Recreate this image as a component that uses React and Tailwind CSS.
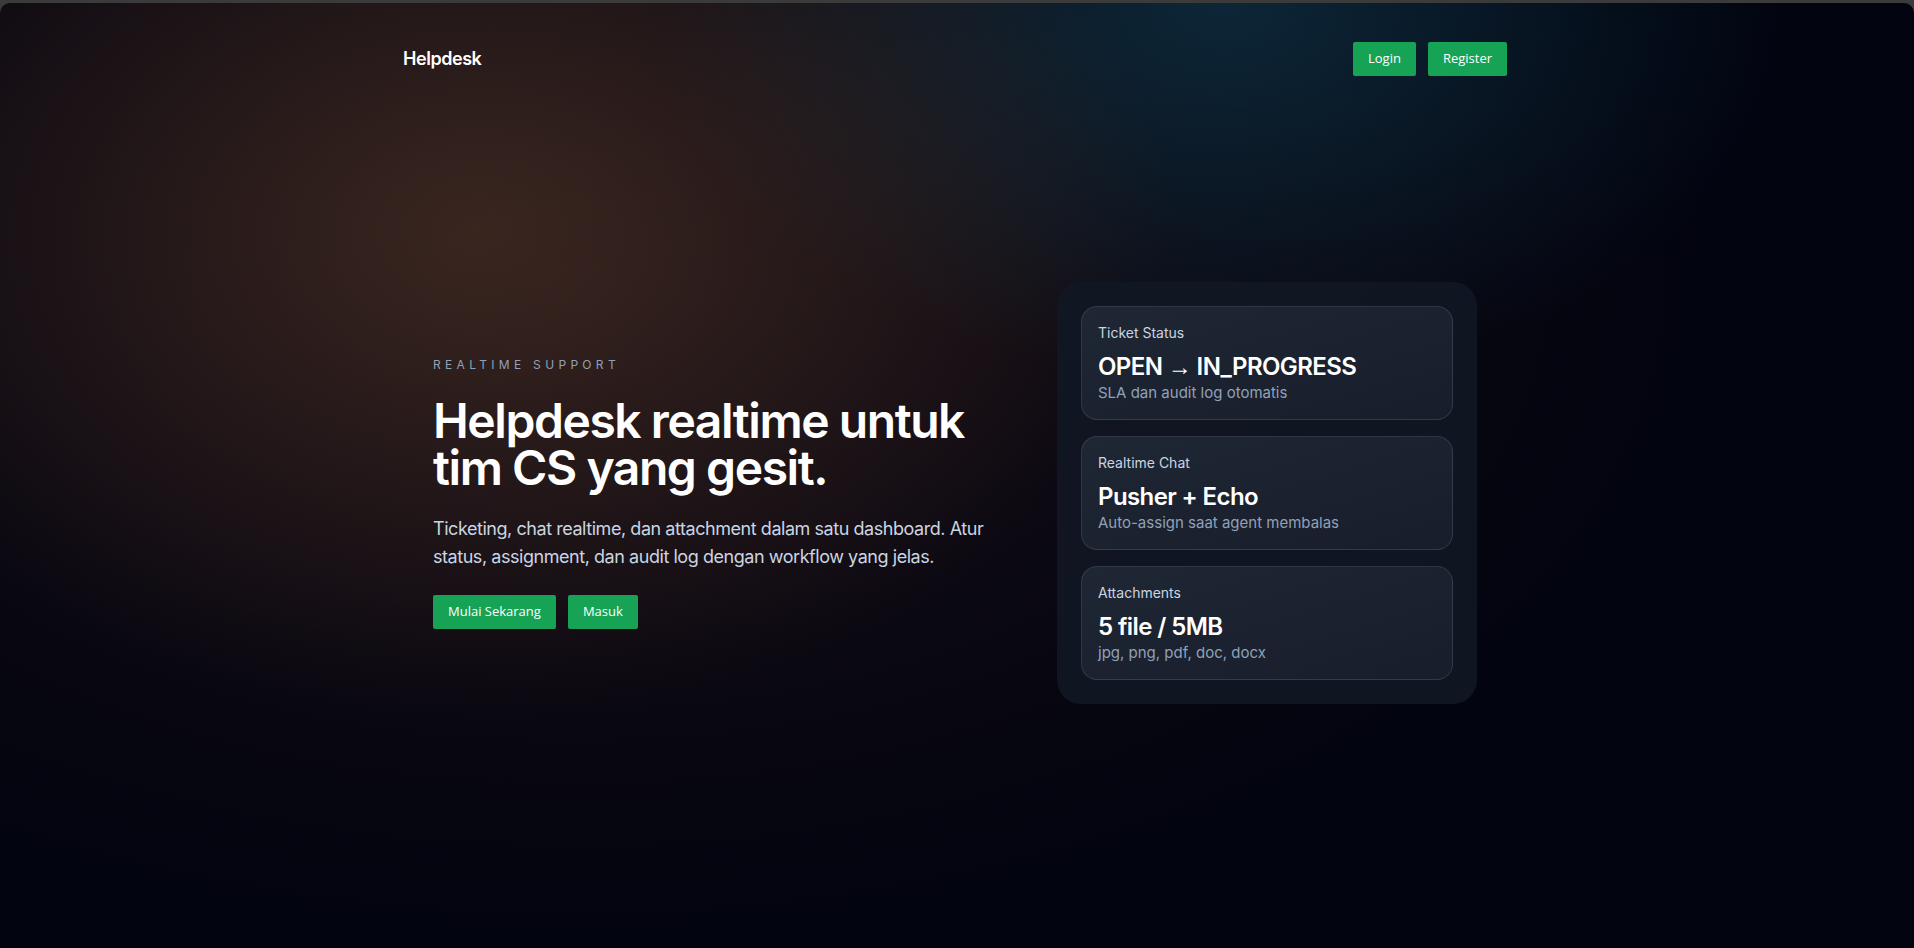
const FEATURES = [
  { label: "Ticket Status", title: "OPEN → IN_PROGRESS", note: "SLA dan audit log otomatis" },
  { label: "Realtime Chat", title: "Pusher + Echo", note: "Auto-assign saat agent membalas" },
  { label: "Attachments", title: "5 file / 5MB", note: "jpg, png, pdf, doc, docx" },
];

function GreenButton({ children }) {
  return (
    <button className="flex h-[34px] items-center rounded-[2px] bg-[#17a356] px-[15px] text-[13px] text-white font-['Open_Sans',sans-serif]">
      {children}
    </button>
  );
}

// the arrow in the title is lighter than Inter's
function Title({ text }) {
  const parts = text.split("→");
  if (parts.length < 2) return text;
  return (
    <>
      {parts[0]}
      <span className="font-['Liberation_Sans',sans-serif] font-normal">→</span>
      {parts[1]}
    </>
  );
}

export default function App() {
  return (
    <div className="min-h-screen bg-[#3b3b3b] pt-[3px]">
      <div
        className="min-h-[945px] overflow-hidden rounded-t-[10px] bg-[#02040f] text-white font-['Inter',sans-serif] bg-[radial-gradient(ellipse_36%_52%_at_25%_24%,rgba(88,58,40,0.55),transparent),radial-gradient(ellipse_30%_40%_at_64%_0%,rgba(14,52,72,0.7),transparent),radial-gradient(ellipse_60%_70%_at_30%_30%,rgba(40,22,26,0.55),transparent)]"
      >
        {/* Header */}
        <header className="mx-auto flex h-[112px] max-w-6xl items-center justify-between pl-[22px] pr-[26px]">
          <span className="text-lg font-semibold tracking-tight">Helpdesk</span>
          <div className="flex items-center gap-3">
            <GreenButton>Login</GreenButton>
            <GreenButton>Register</GreenButton>
          </div>
        </header>

        {/* Hero */}
        <main className="mx-auto flex h-[756px] w-[1044px] -translate-x-[2px] items-center justify-between">
          <div className="w-[580px]">
            <p className="text-xs leading-4 uppercase tracking-[0.36em] text-slate-400">Realtime Support</p>
            <h1 className="mt-6 text-[48px] font-semibold leading-[47px] tracking-[-0.03em]">
              Helpdesk realtime untuk tim CS yang gesit.
            </h1>
            <p className="mt-6 text-lg leading-7 tracking-tight text-slate-300">
              Ticketing, chat realtime, dan attachment dalam satu dashboard. Atur status, assignment, dan audit log dengan workflow yang jelas.
            </p>
            <div className="mt-6 flex gap-3">
              <GreenButton>Mulai Sekarang</GreenButton>
              <GreenButton>Masuk</GreenButton>
            </div>
          </div>

          <div className="flex w-[420px] flex-col gap-4 rounded-3xl bg-[#111723]/90 p-6">
            {FEATURES.map((f) => (
              <div
                key={f.label}
                className="rounded-2xl border border-white/10 bg-gradient-to-br from-[#1f2734] to-[#181d2b] p-4"
              >
                <p className="text-sm leading-5 text-slate-300">{f.label}</p>
                <p className="mt-2 text-2xl font-semibold leading-8 tracking-tight">
                  <Title text={f.title} />
                </p>
                <p className="text-[15px] leading-5 text-slate-400">{f.note}</p>
              </div>
            ))}
          </div>
        </main>
      </div>
    </div>
  );
}
